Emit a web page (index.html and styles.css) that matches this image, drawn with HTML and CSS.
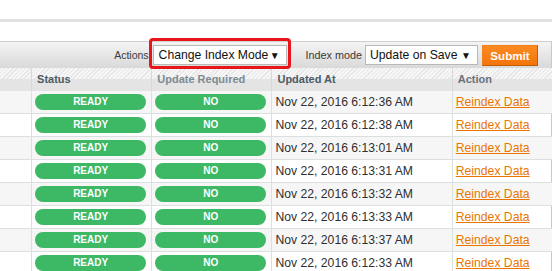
FILE: index.html
```html
<!DOCTYPE html>
<html lang="en">
<head>
  <meta charset="UTF-8">
  <title>Index Management</title>
  <link rel="stylesheet" href="styles.css">
</head>
<body>
<div class="page">
  <div class="top-rule"></div>
  <div class="grid">
    <div class="toolbar">
      <span class="label">Actions</span>
      <span class="marked">
        <span class="select select-actions">Change Index Mode <span class="arrow">▼</span></span>
        <span class="mark"></span>
      </span>
      <span class="label label-mode">Index mode</span>
      <span class="select select-mode">Update on Save <span class="arrow">▼</span></span>
      <button class="submit">Submit</button>
    </div>
    <table class="data">
      <colgroup>
        <col class="c-check">
        <col class="c-status">
        <col class="c-required">
        <col class="c-updated">
        <col class="c-action">
      </colgroup>
      <thead>
        <tr>
          <th></th>
          <th>Status</th>
          <th class="light">Update Required</th>
          <th>Updated At</th>
          <th class="mid">Action</th>
        </tr>
      </thead>
      <tbody>
        <tr class="even"><td></td><td class="pill-cell"><span class="pill">READY</span></td><td class="pill-cell"><span class="pill">NO</span></td><td>Nov 22, 2016 6:12:36 AM</td><td><a href="#">Reindex Data</a></td></tr>
        <tr><td></td><td class="pill-cell"><span class="pill">READY</span></td><td class="pill-cell"><span class="pill">NO</span></td><td>Nov 22, 2016 6:12:38 AM</td><td><a href="#">Reindex Data</a></td></tr>
        <tr class="even"><td></td><td class="pill-cell"><span class="pill">READY</span></td><td class="pill-cell"><span class="pill">NO</span></td><td>Nov 22, 2016 6:13:01 AM</td><td><a href="#">Reindex Data</a></td></tr>
        <tr><td></td><td class="pill-cell"><span class="pill">READY</span></td><td class="pill-cell"><span class="pill">NO</span></td><td>Nov 22, 2016 6:13:31 AM</td><td><a href="#">Reindex Data</a></td></tr>
        <tr class="even"><td></td><td class="pill-cell"><span class="pill">READY</span></td><td class="pill-cell"><span class="pill">NO</span></td><td>Nov 22, 2016 6:13:32 AM</td><td><a href="#">Reindex Data</a></td></tr>
        <tr><td></td><td class="pill-cell"><span class="pill">READY</span></td><td class="pill-cell"><span class="pill">NO</span></td><td>Nov 22, 2016 6:13:33 AM</td><td><a href="#">Reindex Data</a></td></tr>
        <tr class="even"><td></td><td class="pill-cell"><span class="pill">READY</span></td><td class="pill-cell"><span class="pill">NO</span></td><td>Nov 22, 2016 6:13:37 AM</td><td><a href="#">Reindex Data</a></td></tr>
        <tr><td></td><td class="pill-cell"><span class="pill">READY</span></td><td class="pill-cell"><span class="pill">NO</span></td><td>Nov 22, 2016 6:12:33 AM</td><td><a href="#">Reindex Data</a></td></tr>
      </tbody>
    </table>
  </div>
</div>
</body>
</html>
```

FILE: styles.css
```css
html, body {
  margin: 0;
  padding: 0;
  background-color: #fff;
  font-family: "Liberation Sans", Arial, sans-serif;
  color: #2f2f2f;
}
.page {
  width: 552px;
  overflow: hidden;
  height: 271px;
}
.top-rule {
  margin-top: 19px;
  height: 3px;
  background-color: #e1e1e1;
}
.grid {
  margin-top: 19px;
  border-right: 1px solid #c9c9c9;
}
.toolbar {
  display: flex;
  align-items: center;
  justify-content: flex-end;
  height: 26px;
  padding-right: 13px;
  border-top: 1px solid #cfcfcf;
  background-image: linear-gradient(to bottom, #f4f4f4, #d9d9d9);
}
.label {
  font-size: 10.5px;
  color: #3a3a3a;
}
.label-mode {
  margin-left: 19px;
  margin-right: 3px;
  font-size: 10.8px;
}
.marked {
  position: relative;
  display: inline-flex;
  margin-left: 4px;
}
.mark {
  position: absolute;
  left: -4px;
  right: -4px;
  top: -7px;
  bottom: -4px;
  border: 3px solid #e8161b;
  border-radius: 4px;
}
.select {
  display: inline-flex;
  align-items: center;
  justify-content: space-between;
  box-sizing: border-box;
  height: 20px;
  padding: 0 3px 0 5px;
  border: 1px solid #b9b9b9;
  background-color: #fff;
  font-size: 12.2px;
  color: #111;
}
.select-actions {
  width: 134px;
  padding-right: 6px;
}
.select-mode {
  width: 113px;
  padding: 0 6px 0 4px;
}
.arrow {
  font-size: 10px;
}
.submit {
  margin-left: 4px;
  height: 21px;
  width: 56px;
  padding: 0;
  border: 1px solid;
  border-color: #f47f1b #c15e05 #c15e05 #f47f1b;
  background-image: linear-gradient(to bottom, #fb8a23, #f2750a);
  color: #fff;
  font-family: "Liberation Sans", Arial, sans-serif;
  font-size: 11.6px;
  font-weight: bold;
}
.data {
  width: 552px;
  table-layout: fixed;
  border-collapse: separate;
  border-spacing: 0;
  font-size: 12.2px;
}
.c-check { width: 32px; }
.c-status { width: 120px; }
.c-required { width: 120px; }
.c-updated { width: 180px; }
.c-action { width: 99px; }
.data th {
  box-sizing: border-box;
  height: 23px;
  padding: 0 4px 0 5px;
  text-align: left;
  font-size: 11px;
  font-weight: bold;
  color: #4b5b66;
  border-right: 1px solid #d8d8d8;
  border-bottom: 1px solid #e4e4e4;
  background-color: #e4e4e4;
  background-image:
    linear-gradient(to bottom, transparent 50%, #e4e4e4 50%),
    repeating-linear-gradient(135deg, #e6e6e6 0 1px, #f6f6f6 1px 3px);
}
.data th:last-child {
  border-right: none;
}
.data th.light {
  color: #7d8a93;
}
.data th.mid {
  color: #66737c;
}
.data td {
  box-sizing: border-box;
  height: 23px;
  padding: 0 3px;
  border-right: 1px solid #dadfe0;
  border-bottom: 1px solid #dadfe0;
  white-space: nowrap;
}
.data td:last-child {
  border-right: none;
}
.data tr.even td {
  background-color: #f6f6f6;
}
.data td.pill-cell {
  padding: 0 5px 0 3px;
}
.pill {
  display: block;
  height: 16px;
  line-height: 16px;
  border-radius: 8px;
  background-color: #3db864;
  color: #fff;
  font-size: 10px;
  font-weight: bold;
  text-align: center;
}
.data a {
  color: #ea7601;
  text-decoration: underline;
}
```
